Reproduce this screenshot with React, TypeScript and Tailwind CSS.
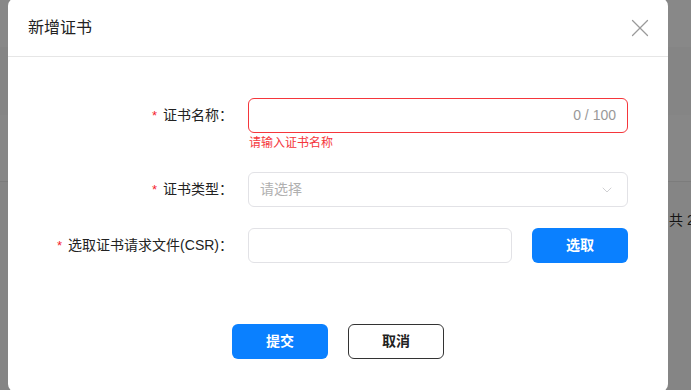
import { X, ChevronDown } from 'lucide-react'

const font = { fontFamily: '"Liberation Sans", "Noto Sans CJK SC", sans-serif' }

function Label({ text }: { text: string }) {
  return (
    <div className="w-[240px] shrink-0 pr-[15px] flex justify-end items-center h-[35px] text-[14px] text-[#222]">
      <span className="text-[#f5222d] mr-[6px] text-[13px]">*</span>
      <span>{text}：</span>
    </div>
  )
}

export default function App() {
  return (
    <div className="relative w-[691px] h-[390px] overflow-hidden bg-[#858585]" style={font}>
      {/* page behind the mask */}
      <div className="flex flex-col">
        <div className="h-[47px] bg-[#888888]" />
        <div className="h-[68px] bg-[#858585]" />
        <div className="h-[67px] bg-[#878787] border-b border-[#7c7c7c]" />
        <div className="h-[76px] flex items-center pl-[669px]">
          <span className="text-[14px] text-[#151515] whitespace-nowrap">共 2</span>
        </div>
      </div>

      {/* dialog */}
      <div className="absolute left-[8px] top-[-2px] w-[660px] h-[394px] bg-white rounded-[8px] flex flex-col">
        <div className="h-[59px] pt-[2px] px-[20px] flex items-center justify-between border-b border-[#e6e6e6]">
          <span className="text-[16px] text-[#222]">新增证书</span>
          <X className="w-[30px] h-[30px] text-[#9a9a9a] mr-[-7px]" strokeWidth={1} />
        </div>

        <div className="pt-[41px] flex flex-col">
          <div className="flex">
            <Label text="证书名称" />
            <div className="flex flex-col">
              <div className="w-[380px] h-[35px] border border-[#f5363b] rounded-[6px] flex items-center justify-end px-[11px] text-[14px] text-[#999]">
                0 / 100
              </div>
              <div className="h-[20px] flex items-center text-[12px] text-[#f5363b] pl-[1px]">请输入证书名称</div>
            </div>
          </div>

          <div className="flex mt-[19px]">
            <Label text="证书类型" />
            <div className="w-[380px] h-[35px] border border-[#e2e2e6] rounded-[6px] flex items-center justify-between pl-[11px] pr-[12px] text-[14px] text-[#b0b0b0]">
              <span>请选择</span>
              <ChevronDown className="w-[16px] h-[16px] text-[#c4c4c8]" strokeWidth={1.2} />
            </div>
          </div>

          <div className="flex mt-[21px]">
            <Label text="选取证书请求文件(CSR)" />
            <div className="w-[264px] h-[35px] border border-[#e2e2e6] rounded-[6px]" />
            <button className="ml-[20px] w-[96px] h-[35px] rounded-[6px] bg-[#0a80ff] text-white text-[14px] font-bold">
              选取
            </button>
          </div>

          <div className="flex justify-center gap-[20px] mt-[61px]">
            <button className="w-[96px] h-[35px] rounded-[6px] bg-[#0a80ff] text-white text-[14px] font-bold">
              提交
            </button>
            <button className="w-[96px] h-[35px] rounded-[6px] border border-[#333] bg-white text-[#222] text-[14px] font-bold">
              取消
            </button>
          </div>
        </div>
      </div>
    </div>
  )
}
